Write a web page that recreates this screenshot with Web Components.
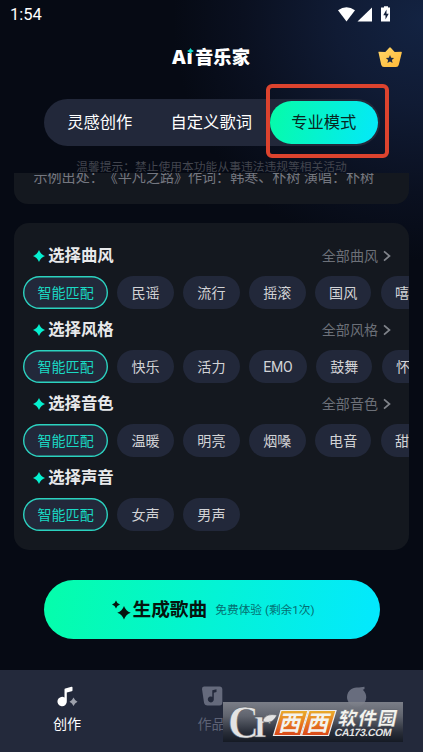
<!DOCTYPE html>
<html lang="zh-CN">
<head>
<meta charset="utf-8">
<title>Ai音乐家</title>
<style>
html,body{margin:0;height:100%;overflow:hidden;background:#060a14}
body{font-family:Roboto,"Noto Sans CJK SC",sans-serif}
</style>
</head>
<body>
<music-app></music-app>
<script>
const define = (name, html, setup) => customElements.define(name, class extends HTMLElement {
  constructor() {
    super();
    const t = document.createElement('template');
    t.innerHTML = html;
    this.attachShadow({mode: 'open'}).append(t.content.cloneNode(true));
  }
  connectedCallback() { if (setup) setup(this, this.shadowRoot); }
});

define('status-bar', `
<style>
:host{display:flex;height:29px;align-items:center;justify-content:space-between;padding:0 32px 0 10px;box-sizing:border-box;color:#fff;font-size:16.5px;line-height:20px}
svg{display:block;width:54px;height:18px}
span{padding-top:1px}
</style>
<span>1:54</span>
<svg viewBox="0 0 54 18"><g fill="#fff"><path d="M1 4.300Q9.500-1.800 18 4.300L9.500 15.500Z"/><path d="M35 1.500V15.500H20.500Z"/><path d="M45 1.500h2V.3h4v1.200h2v14h-9v-14z"/></g><path d="M49.500 3.500l-3.200 5.700h2.200v4.300l3.200-5.800h-2.200z" fill="#14203a"/></svg>`);

define('app-header', `
<style>
:host{display:grid;grid-template-columns:1fr auto 1fr;align-items:center;height:56px;padding:0 21.500px 0 20.500px;color:#fff}
h1{grid-column:2;margin:1px 0 0;display:flex;align-items:baseline;font-size:18.300px;font-weight:900;line-height:26px}
.ai{font-family:"Open Sans",sans-serif;font-weight:800;font-size:19px;position:relative;letter-spacing:.6px;width:23px}
.ai svg{position:absolute;left:15px;top:4px;width:7px;height:6px}
.crown{justify-self:end;width:24px;height:20px;margin:-1px 0 0}
</style>
<h1><span class="ai">Aı<svg viewBox="0 0 7 6"><path d="M3.500 0Q4.200 2 7 3Q4.200 4 3.500 6Q2.800 4 0 3Q2.800 2 3.500 0" fill="#16ddcc"/></svg></span><span>音乐家</span></h1>
<svg class="crown" viewBox="0 0 24 20"><defs><linearGradient id="g" x1="0" y1="0" x2="1" y2="1"><stop stop-color="#ffd66b"/><stop offset="1" stop-color="#ffb936"/></linearGradient></defs><path d="M.5 5.500Q0 4.500 1 4.700L7.300 5 11.200.7Q12 0 12.800.7L16.700 5 23 4.700Q24.200 4.500 23.700 6L20.800 17.800Q20.300 20 18 20H6Q3.700 20 3.200 17.800Z" fill="url(#g)"/><path d="M12 8l1.200 2.700 2.900.3-2.200 2 .7 2.900-2.600-1.500-2.600 1.500.7-2.900-2.200-2 2.900-.3z" fill="#1d2943"/></svg>`);

define('mode-tab', `
<style>
:host{display:flex;align-items:center;justify-content:center;box-sizing:border-box;border-radius:24px;height:42.500px;color:#fff;font-size:16.300px;line-height:24px;white-space:nowrap}
:host(:not([active])){padding-right:2.500px}
:host([active]){background:linear-gradient(105deg,#06fca7,#04e8fb);color:#09251f}
</style><slot></slot>`);

define('mode-tabs', `
<style>
:host{display:grid;grid-template-columns:108px 115px 107.500px;justify-content:end;align-items:center;position:relative;box-sizing:border-box;margin:14px 43px 0 44px;height:47px;padding:0 2.500px 0 0;border-radius:24px;background:#22283a}
.frame{position:absolute;left:222px;top:-15px;width:123px;height:74px;box-sizing:border-box;border:4px solid #dc432e;border-radius:6px}
</style>
<mode-tab>灵感创作</mode-tab><mode-tab>自定义歌词</mode-tab><mode-tab active>专业模式</mode-tab><div class="frame"></div>`);

define('source-card', `
<style>
:host{display:block;box-sizing:border-box;height:31px;margin:0 14px;padding-left:19.500px;overflow:hidden;background:#14181f;border-radius:0 0 14px 14px;color:#747780;font-size:14.050px;line-height:20px;white-space:nowrap;text-spacing-trim:space-all}
div{margin-top:-6px}
</style><div><slot></slot></div>`);

define('choice-chip', `
<style>
:host{display:flex;flex:none;align-items:center;box-sizing:border-box;height:33px;border-radius:17px;padding:0 14.200px;background:#22283a;color:#d2d3d6;font-size:14.050px;line-height:20px;white-space:nowrap}
:host([selected]){box-shadow:inset 0 0 0 1.400px #2bd2bf;color:#1ad9c4}
:host([tight]){letter-spacing:-.25px}
</style><slot></slot>`);

define('choice-group', `
<style>
:host{display:block;height:74px}
.head{display:flex;align-items:center;height:40px;padding:0 18px 0 19px}
.star{width:12px;height:12px;margin-right:3.200px}
h2{margin:0;font-size:16.400px;font-weight:700;line-height:24px;color:#e8e9eb;flex:1}
.all{display:flex;align-items:center;gap:5px;font-size:14.050px;line-height:20px;color:#6c7078}
.all svg{width:8px;height:12px;margin-top:0}
.row{display:flex;gap:9.400px;padding-left:9.300px;overflow:hidden}
</style>
<div class="head"><svg class="star" viewBox="0 0 12 12"><path d="M6 0Q7.700 4.300 12 6Q7.700 7.700 6 12Q4.300 7.700 0 6Q4.300 4.300 6 0" fill="#06efcf"/></svg><h2></h2></div>
<div class="row"><slot></slot></div>`, (el, root) => {
  root.querySelector('h2').textContent = el.getAttribute('heading');
  if (el.hasAttribute('more') && !root.querySelector('.all')) {
    root.querySelector('.head').insertAdjacentHTML('beforeend', '<div class="all"><span></span><svg viewBox="0 0 8 12"><path d="M1 1.300L6.500 6 1 10.700" fill="none" stroke="#81848b" stroke-width="1.700"/></svg></div>');
    root.querySelector('.all span').textContent = el.getAttribute('more');
  }
});

define('choice-panel', `
<style>
:host{display:block;box-sizing:border-box;height:327px;margin:19px 14px 0;padding-top:13px;background:#14181f;border-radius:15px;overflow:hidden}
</style><slot></slot>`);

define('generate-button', `
<style>
:host{display:flex;align-items:center;box-sizing:border-box;height:59px;margin:30px 43px 0 44px;padding-left:66.500px;border-radius:30px;background:linear-gradient(100deg,#05feaa,#03e8ff);color:#06150f}
svg{width:20px;height:20px;margin-right:2px}
b{font-size:18.700px;line-height:26px}
small{margin-left:8px;font-size:11.700px;line-height:18px;color:#056e70;white-space:nowrap}
</style>
<svg viewBox="0 0 20 20"><path d="M5 .5Q5.900 3.600 9 4.500Q5.900 5.400 5 8.500Q4.100 5.400 1 4.500Q4.100 3.600 5 .5M13 6Q14.800 11.200 19.700 12.800Q14.800 14.500 13 19.500Q11.200 14.500 6.300 12.800Q11.200 11.200 13 6" fill="#06150f"/></svg>
<b>生成歌曲</b><small>免费体验 (剩余1次)</small>`);

define('nav-item', `
<style>
:host{display:flex;flex-direction:column;align-items:center;padding-top:15px;gap:4px;font-size:14.100px;line-height:22px;color:#5d6275}
:host([active]){color:#fff}
::slotted(svg){width:24px;height:24px;display:block}
</style><slot name="icon"></slot><slot></slot>`);

define('site-mark', `
<style>
:host{display:block;position:absolute;left:223px;top:32px;width:180px;height:40px;background:linear-gradient(#81848dee,#60646e 35%,#292e39 75%,#151a24)}
svg{display:block}
</style>
<svg width="180" height="40" viewBox="0 0 180 40">
<defs><linearGradient id="o" x1="0" y1="0" x2="0" y2="1"><stop stop-color="#e9ad2c"/><stop offset=".5" stop-color="#e87a22"/><stop offset="1" stop-color="#d94719"/></linearGradient></defs>
<g fill="#e3e3e3" stroke="#4b4e56" stroke-width=".5">
<text x="5" y="35.500" font-family="Liberation Serif,serif" font-weight="700" font-size="47" textLength="31" lengthAdjust="spacingAndGlyphs">C</text>
<text x="31" y="35" font-family="Liberation Serif,serif" font-weight="700" font-size="44" textLength="17" lengthAdjust="spacingAndGlyphs">r</text>
<path d="M40 18Q43 11 54 13Q50 22 41 20Z"/></g>
<g stroke="#eee" stroke-width="1.200" fill="url(#o)"><path d="M58 8.500H85L77.500 33.500H50.500Z"/><path d="M86 8.500H113L105.500 33.500H78.500Z"/></g>
<g fill="#f3f3ee" font-family="Noto Sans CJK SC,sans-serif">
<g font-size="22" font-weight="700"><text transform="translate(55 29) skewX(-14)">西</text><text transform="translate(83 29) skewX(-14)">西</text></g>
<g stroke="#565a64" stroke-width=".3" font-weight="900"><text transform="translate(114.500 23) skewX(-12)" font-size="18.500" textLength="58">软件园</text></g>
</g>
<text transform="translate(111 34) skewX(-12)" font-family="Liberation Sans,sans-serif" font-weight="700" font-size="10.500" fill="#e4e4e4" textLength="57">CA173.COM</text>
</svg>`);

define('bottom-nav', `
<style>
:host{display:grid;grid-template-columns:repeat(3,144.500px);justify-content:center;position:relative;margin-top:31px;height:82px;box-sizing:border-box;background:#23293b}
</style>
<nav-item active><svg slot="icon" viewBox="0 0 24 24"><path d="M10.300 3.500L16.500 1.800Q17.500 1.600 17.500 2.600V5.200Q17.500 6 16.700 6.200L11.800 7.500V16.200A4.700 4.700 0 1 1 9.500 12.500V4.500Q9.500 3.700 10.300 3.500" fill="#fff"/><path d="M18.500 12.500Q19.700 15.500 22.500 16.700Q19.700 17.900 18.500 21Q17.300 17.900 14.500 16.700Q17.300 15.500 18.500 12.500" fill="#9da1ab"/></svg>创作</nav-item>
<nav-item><svg slot="icon" viewBox="0 0 24 24"><path d="M4 1.500H19.500Q22.300 1.500 22.300 4.500V17.500Q22.300 20.500 19.500 20.500H7.500Q4.500 20.500 4 17.500L2 4Q1.800 1.500 4 1.500" fill="#656a7c"/><path d="M12.300 5.200L16.500 4.200V7L13.800 7.800V14.500A3 3 0 1 1 12.300 11.800" fill="#23293b"/></svg>作品</nav-item>
<nav-item><svg slot="icon" viewBox="0 0 24 24"><path d="M15 2.500L20.500 1.800V4Q19.500 4.700 18.800 4.800A9.600 9.600 0 1 1 13.500 2.600Z" fill="#686d7e"/></svg></nav-item>
<site-mark></site-mark>`);

define('music-app', `
<style>
:host{display:block;width:423px;height:752px;overflow:hidden;background:radial-gradient(ellipse 250px 240px at 423px 20px,#132342 0,#101b34 35%,#0a1020 72%,#060a14 100%),#060a14}
.notice{display:block;height:27px;box-sizing:border-box;padding-top:12px;text-align:center;font-size:11.780px;line-height:18px;color:#42454e;white-space:nowrap}
</style>
<status-bar></status-bar>
<app-header></app-header>
<mode-tabs></mode-tabs>
<div class="notice">温馨提示&#xFF1A;禁止使用本功能从事违法违规等相关活动</div>
<source-card>示例出处&#xFF1A;《平凡之路》作词&#xFF1A;韩寒、朴树 演唱&#xFF1A;朴树</source-card>
<choice-panel>
<choice-group heading="选择曲风" more="全部曲风"><choice-chip selected>智能匹配</choice-chip><choice-chip>民谣</choice-chip><choice-chip>流行</choice-chip><choice-chip>摇滚</choice-chip><choice-chip>国风</choice-chip><choice-chip>嘻哈</choice-chip></choice-group>
<choice-group heading="选择风格" more="全部风格"><choice-chip selected>智能匹配</choice-chip><choice-chip>快乐</choice-chip><choice-chip>活力</choice-chip><choice-chip tight>EMO</choice-chip><choice-chip>鼓舞</choice-chip><choice-chip>怀旧</choice-chip></choice-group>
<choice-group heading="选择音色" more="全部音色"><choice-chip selected>智能匹配</choice-chip><choice-chip>温暖</choice-chip><choice-chip>明亮</choice-chip><choice-chip>烟嗓</choice-chip><choice-chip>电音</choice-chip><choice-chip>甜美</choice-chip></choice-group>
<choice-group heading="选择声音"><choice-chip selected>智能匹配</choice-chip><choice-chip>女声</choice-chip><choice-chip>男声</choice-chip></choice-group>
</choice-panel>
<generate-button></generate-button>
<bottom-nav></bottom-nav>`);
</script>
</body>
</html>
